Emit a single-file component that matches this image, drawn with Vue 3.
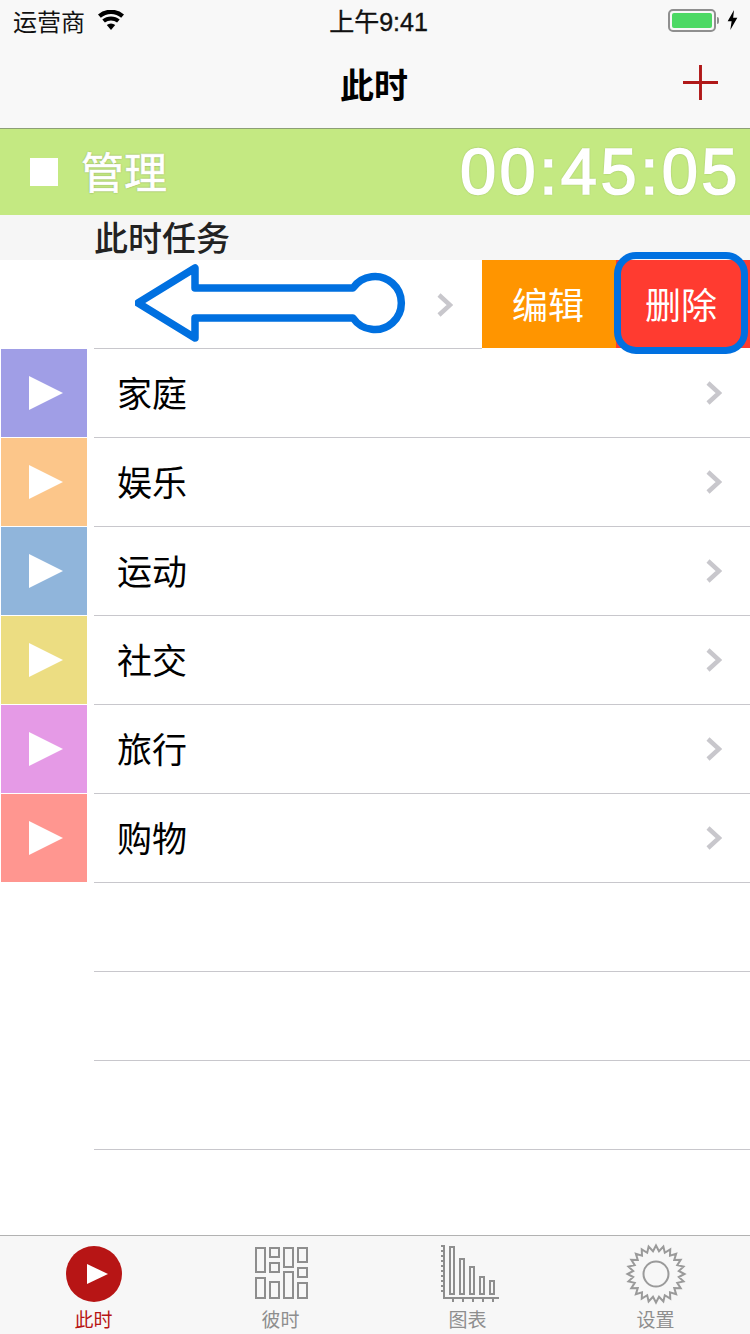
<template>
  <div class="page">
    <header class="top">
      <div class="status">
        <div class="status__left">
          <span>运营商</span>
          <svg class="wifi" viewBox="0 0 28 20" aria-hidden="true">
            <path d="M14 20l-4.2-5a6.4 6.4 0 0 1 8.4 0z" />
            <path d="M7.9 12.6l-2.6-3a13.4 13.4 0 0 1 17.4 0l-2.6 3a9.6 9.6 0 0 0-12.2 0z" />
            <path d="M3.8 7.8L1 4.6a19.6 19.6 0 0 1 26 0l-2.8 3.2a15.6 15.6 0 0 0-20.4 0z" />
          </svg>
        </div>
        <div class="status__time">上午9:41</div>
        <div class="status__right">
          <span class="battery"><i></i></span>
          <span class="battery__nub"></span>
          <svg class="bolt" viewBox="0 0 10 18" aria-hidden="true">
            <path d="M6.4 0L0.6 10.2h3.6L3 18l6.4-11H5.6z" />
          </svg>
        </div>
      </div>
      <div class="nav">
        <h1>此时</h1>
        <svg class="nav__add" viewBox="0 0 36 36" aria-hidden="true">
          <path d="M18 0v36M0 18h36" />
        </svg>
      </div>
    </header>

    <section class="running">
      <span class="running__stop"></span>
      <span class="running__name">管理</span>
      <span class="running__clock">00:45:05</span>
    </section>

    <div class="section-title">此时任务</div>

    <div class="list">
      <!-- row swiped open -->
      <div class="row row--swiped">
        <div class="row__main">
          <svg class="chev" viewBox="0 0 16 24" aria-hidden="true"><path d="M2 2l11 10L2 22" /></svg>
        </div>
        <button type="button" class="act act--edit">编辑</button>
        <button type="button" class="act act--del">删除</button>
        <svg class="hint-arrow" viewBox="0 0 280 80" aria-hidden="true">
          <path d="M3 39L60 4v20h158a26.5 26.5 0 1 1 0 30H60v20z" />
        </svg>
        <span class="hint-box"></span>
      </div>

      <div v-for="(t, i) in tasks" :key="i" class="row">
        <div class="swatch" :style="{ background: t.color }">
          <i v-if="t.color" class="swatch__play"></i>
        </div>
        <div class="row__body">
          <span class="row__name">{{ t.name }}</span>
          <svg v-if="t.name" class="chev chev--row" viewBox="0 0 16 24" aria-hidden="true"><path d="M2 2l11 10L2 22" /></svg>
        </div>
      </div>
    </div>

    <nav class="tabs">
      <div class="tab tab--on">
        <svg viewBox="0 0 60 60" class="tab__icon" aria-hidden="true">
          <circle cx="30" cy="30" r="28" fill="#b71515" />
          <path d="M23 20l21 10-21 10z" fill="#fff" />
        </svg>
        <span>此时</span>
      </div>
      <div class="tab">
        <svg viewBox="0 0 60 60" class="tab__icon" aria-hidden="true">
          <g fill="none" stroke="#8e8e8e" stroke-width="2">
            <rect v-for="(b, i) in blocks" :key="i" :x="b[0]" :y="b[1]" :width="b[2]" :height="b[3]" />
          </g>
        </svg>
        <span>彼时</span>
      </div>
      <div class="tab">
        <svg viewBox="0 0 60 60" class="tab__icon" aria-hidden="true">
          <g fill="none" stroke="#8e8e8e" stroke-width="2">
            <path d="M6 1v53h55" />
            <path d="M3 2h3M3 7h3M3 12h3M3 17h3M3 22h3M3 27h3M3 32h3M3 37h3M3 42h3M3 47h3" />
            <path d="M15 54v4M25 54v4M35 54v4M45 54v4M55 54v4" />
            <rect v-for="(b, i) in bars" :key="i" :x="b[0]" :y="b[1]" width="4" :height="50 - b[1]" />
          </g>
        </svg>
        <span>图表</span>
      </div>
      <div class="tab">
        <svg viewBox="0 0 60 60" class="tab__icon" aria-hidden="true">
          <polygon :points="gearPoints" fill="none" stroke="#9a9a9a" stroke-width="2" />
          <circle cx="30" cy="30" r="12.5" fill="none" stroke="#9a9a9a" stroke-width="2" />
        </svg>
        <span>设置</span>
      </div>
    </nav>
  </div>
</template>

<script setup>
const tasks = [
  { name: '家庭', color: '#a09ee6' },
  { name: '娱乐', color: '#fcc68a' },
  { name: '运动', color: '#90b5db' },
  { name: '社交', color: '#ecdd82' },
  { name: '旅行', color: '#e59ae6' },
  { name: '购物', color: '#ff9690' },
  { name: '', color: '' },
  { name: '', color: '' },
  { name: '', color: '' },
]

// x, y, w, h of the little blocks in the second tab icon
const blocks = [
  [5, 4, 9, 24], [5, 34, 9, 20],
  [19, 4, 9, 9], [19, 19, 9, 9], [19, 38, 9, 16],
  [33, 4, 9, 19], [33, 28, 9, 26],
  [47, 4, 9, 14], [47, 24, 9, 9], [47, 39, 9, 15],
]

const bars = [[12, 3], [22, 15], [32, 23], [42, 33], [52, 37]]

// sun shaped cog: 24 spikes
const gearPoints = Array.from({ length: 48 }, (_, i) => {
  const r = i % 2 ? 23 : 28.5
  const a = (i * Math.PI) / 24
  return `${(30 + r * Math.sin(a)).toFixed(2)},${(30 - r * Math.cos(a)).toFixed(2)}`
}).join(' ')
</script>

<style>
html, body { margin: 0; background: #fff; }
</style>

<style scoped>
.page {
  width: 750px;
  height: 1334px;
  display: flex;
  flex-direction: column;
  overflow: hidden;
  background: #fff;
  color: #000;
  font-family: "Liberation Sans", "Noto Sans CJK SC", sans-serif;
}

.top { background: #f8f8f8; height: 128px; flex: none; }
.status {
  height: 40px;
  display: grid;
  grid-template-columns: 1fr auto 1fr;
  align-items: center;
  padding: 0 12px 0 13px;
  font-size: 24px;
  color: #111;
}
.status__left { display: flex; align-items: center; gap: 12px; }
.wifi { width: 28px; height: 20px; fill: #000; }
.status__time { margin-left: 6px; font-size: 25px; -webkit-text-stroke: .4px #111; }
.status__right { display: flex; align-items: center; justify-content: flex-end; }
.battery {
  width: 48px;
  height: 23px;
  box-sizing: border-box;
  border: 2px solid #8f8f8f;
  border-radius: 5px;
  padding: 2px;
  display: flex;
}
.battery i { flex: 1; background: #4cd964; border-radius: 2px; }
.battery__nub { width: 2px; height: 7px; background: #8f8f8f; margin-left: 1px; border-radius: 0 2px 2px 0; }
.bolt { width: 11px; height: 20px; margin-left: 8px; fill: #000; }

.nav { position: relative; height: 88px; display: flex; align-items: center; justify-content: center; }
.nav h1 { margin: 0 2px 2px 0; font-size: 34px; font-weight: 700; }
.nav__add {
  position: absolute;
  right: 32px;
  top: 25px;
  width: 35px;
  height: 35px;
  fill: none;
  stroke: #b01818;
  stroke-width: 3;
}

.running {
  flex: none;
  height: 86px;
  border-top: 1px solid #8d9f76;
  background: #c4e982;
  display: flex;
  align-items: center;
  padding: 0 9px 0 30px;
  color: #fff;
}
.running__stop { width: 28px; height: 28px; background: #fff; margin-right: 23px; }
.running__name {
  font-size: 43px;
  margin-bottom: 5px;
  -webkit-text-stroke: .7px #fff;
  text-shadow: 0 0 2px rgba(0, 0, 0, .45);
}
.running__clock {
  margin-left: auto;
  margin-bottom: 2px;
  font-size: 65px;
  letter-spacing: 3.5px;
  -webkit-text-stroke: 1.6px #fff;
  text-shadow: 0 0 2px rgba(0, 0, 0, .5);
}

.section-title {
  flex: none;
  height: 45px;
  line-height: 49px;
  box-sizing: border-box;
  padding-left: 94px;
  background: #f6f6f6;
  font-size: 34px;
  font-weight: 500;
  color: #222;
}

.list { flex: 1; min-height: 0; }
.row { position: relative; height: 89px; display: flex; }
.swatch {
  width: 86px;
  margin: 0 7px 1px 1px;
  flex: none;
  display: flex;
  align-items: center;
  padding-left: 28px;
  box-sizing: border-box;
}
.swatch__play {
  width: 0;
  height: 0;
  border-style: solid;
  border-width: 17px 0 17px 34px;
  border-color: transparent transparent transparent #fff;
}
.row__body {
  flex: 1;
  display: flex;
  align-items: center;
  justify-content: space-between;
  border-bottom: 1px solid #c8c7cc;
  padding: 0 28px 4px 23px;
}
.row__name { font-size: 35px; }
.chev { width: 16px; height: 24px; fill: none; stroke: #c8c7cc; stroke-width: 4.5; }
.chev--row { margin-top: 4px; }

.row--swiped { height: 89px; box-sizing: border-box; }
.row__main {
  width: 482px;
  box-sizing: border-box;
  display: flex;
  align-items: center;
  justify-content: flex-end;
  padding-right: 29px;
  position: relative;
}
.row__main::after {
  content: "";
  position: absolute;
  left: 94px;
  right: 0;
  bottom: 0;
  height: 1px;
  background: #c8c7cc;
}
.act {
  border: 0;
  margin: 0 0 1px;
  width: 134px;
  color: #fff;
  font: inherit;
  font-size: 36px;
  padding: 0 0 2px;
}
.act--edit { background: #ff9500; padding-right: 2px; }
.act--del { background: #ff3b30; padding-right: 4px; }

/* swipe hint drawn over the row */
.hint-arrow {
  position: absolute;
  left: 135px;
  top: 4px;
  width: 280px;
  height: 80px;
  fill: none;
  stroke: #0070e0;
  stroke-width: 7.5;
  stroke-linejoin: round;
}
.hint-box {
  position: absolute;
  left: 614px;
  top: -8px;
  width: 134px;
  height: 102px;
  box-sizing: border-box;
  border: 7px solid #0070e0;
  border-radius: 22px;
}

.tabs {
  flex: none;
  height: 99px;
  box-sizing: border-box;
  border-top: 1px solid #b2b2b2;
  background: #f7f7f7;
  display: grid;
  grid-template-columns: 187px 187px 187px 189px;
}
.tab {
  display: flex;
  flex-direction: column;
  align-items: center;
  font-size: 19px;
  color: #8e8e8e;
  line-height: 24px;
}
.tab__icon { width: 60px; height: 60px; margin-top: 8px; overflow: visible; flex: none; }
.tab span { margin-top: 5px; }
.tab--on { color: #b71515; }
</style>
